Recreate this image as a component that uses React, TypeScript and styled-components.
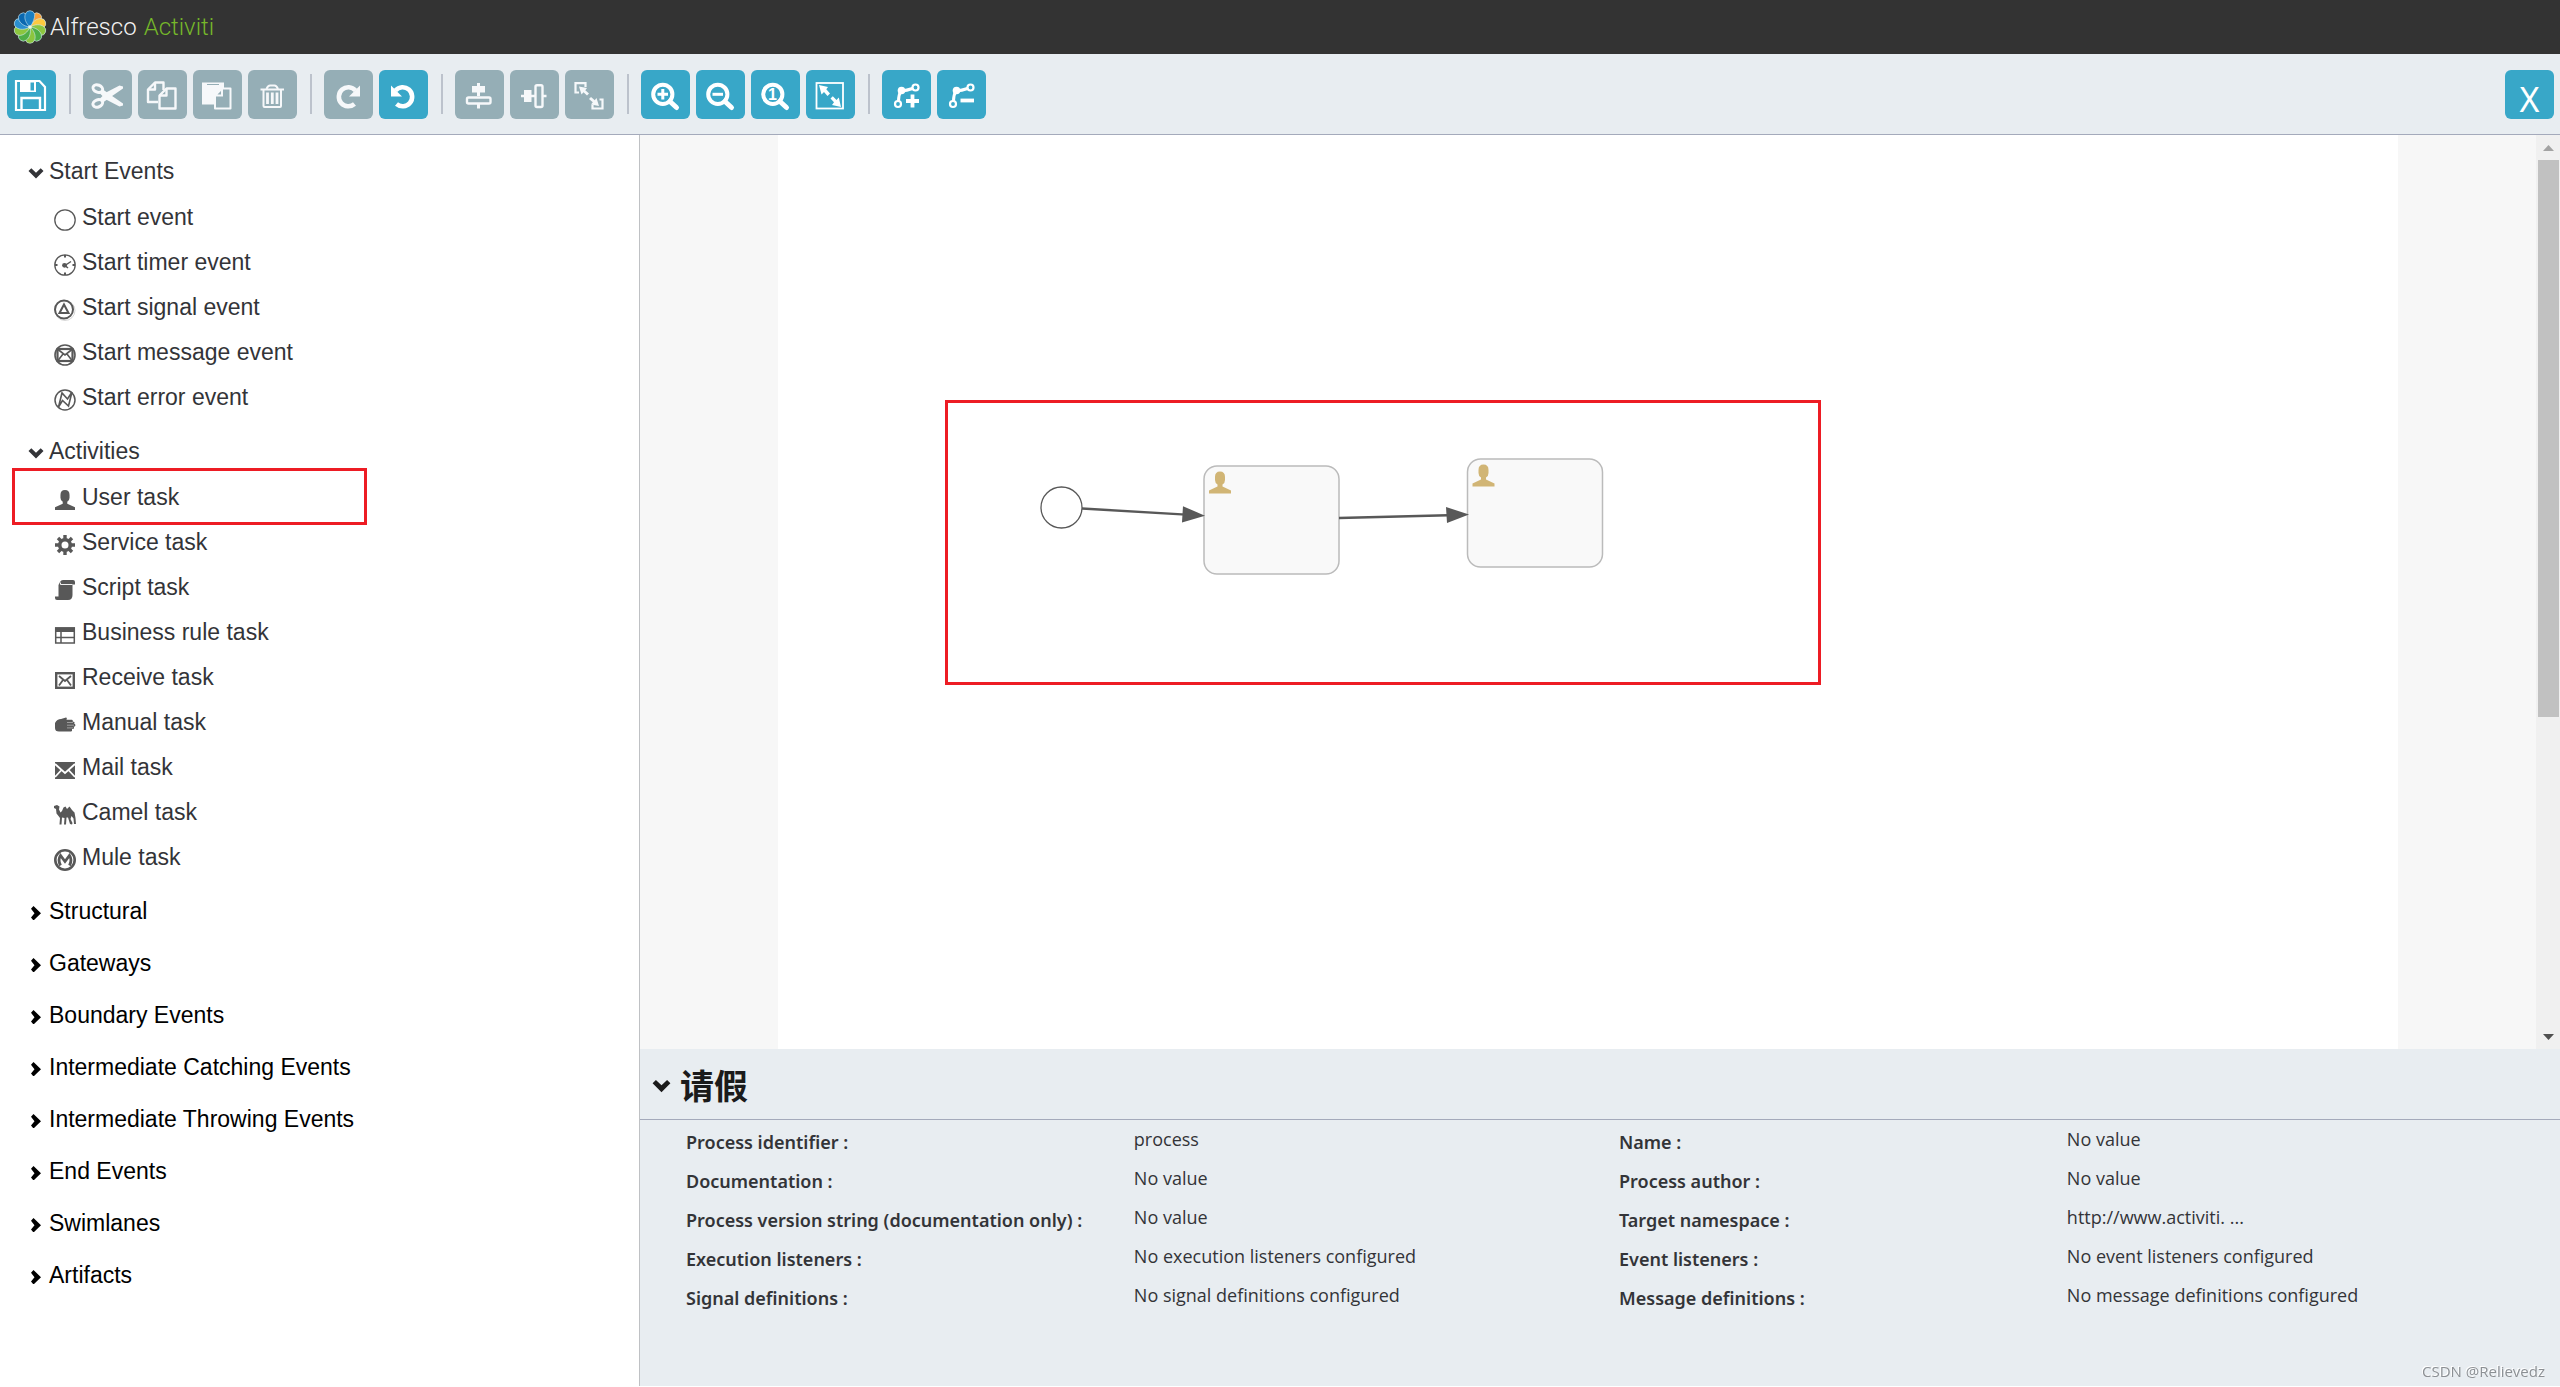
import React from "react";
import styled, { createGlobalStyle } from "styled-components";

const color = {
  bar: "#333333",
  panel: "#e8edf1",
  line: "#a4aabb",
  blue: "#38a7c8",
  muted: "#95aeb6",
  text: "#333438",
  icon: "#585858",
  mark: "#ed1c24",
};

const GlobalStyle = createGlobalStyle`
  * { box-sizing: border-box; }
  body { margin: 0; background: #ffffff; font-family: "Liberation Sans", Arial, sans-serif; color: ${color.text}; }
  h1, h2, ul, dl, dd, dt { margin: 0; padding: 0; font-weight: inherit; }
  button { font: inherit; color: inherit; border: 0; padding: 0; background: none; cursor: pointer; }
  svg { display: block; flex: none; }
`;

const Page = styled.div`
  display: flex;
  flex-direction: column;
  height: 100vh;
  padding-bottom: 1px;
`;

const Header = styled.header`
  display: flex;
  align-items: center;
  height: 54px;
  padding-left: 12px;
  background: ${color.bar};
`;

const Brand = styled.h1`
  display: flex;
  align-items: center;
  gap: 2px;
  font-family: Roboto, "Open Sans", sans-serif;
  font-size: 24px;
  font-weight: 300;
  line-height: 32px;
  color: #f2f2f2;
`;

const Product = styled.span`
  margin-left: 5px;
  color: #76b82a;
`;

const Toolbar = styled.div`
  display: flex;
  align-items: center;
  gap: 6px;
  height: 81px;
  padding: 0 6px 0 7px;
  background: ${color.panel};
  border-bottom: 1px solid ${color.line};
`;

const Divider = styled.span`
  width: 2px;
  height: 40px;
  margin: 0 6px 0 7px;
  background: #bcc2cc;
`;

const ToolButton = styled.button<{ $active?: boolean }>`
  width: 49px;
  height: 49px;
  border-radius: 6px;
  background: ${(p) => (p.$active ? color.blue : color.muted)};
  color: ${(p) => (p.$active ? "#ffffff" : "#f6f8fa")};
`;

const CloseButton = styled(ToolButton)`
  margin-left: auto;
  padding-top: 10px;
  font-family: "Noto Sans", sans-serif;
  font-size: 34px;
  line-height: 39px;
`;

const Workspace = styled.div`
  display: flex;
  flex: 1;
  min-height: 0;
`;

const Sidebar = styled.nav`
  width: 25%;
  padding: 14px 0 0 12px;
  border-right: 1px solid #bfc1c4;
  font-size: 23px;
  line-height: 45px;
`;

const Section = styled.section`
  margin-bottom: 7px;
`;

const SectionToggle = styled.button<{ $open?: boolean }>`
  display: flex;
  align-items: center;
  gap: 5px;
  height: 45px;
  padding-left: 16px;
  color: ${(p) => (p.$open ? color.text : "#000000")};
`;

const StencilList = styled.ul`
  padding: 1px 0 2px;
  list-style: none;
`;

const StencilItem = styled.li`
  position: relative;
  display: flex;
  align-items: center;
  gap: 6px;
  height: 45px;
  padding-left: 42px;

  svg { margin-top: 4px; color: ${color.icon}; }
`;

const ItemMark = styled.span`
  position: absolute;
  inset: -7px auto -5px 0;
  width: 355px;
  border: 3px solid ${color.mark};
`;

const Main = styled.main`
  display: flex;
  flex: 1;
  flex-direction: column;
  min-width: 0;
`;

const CanvasArea = styled.div`
  display: flex;
  flex: 1;
  min-height: 0;
  background: #f7f7f7;
`;

const CanvasScroll = styled.div`
  display: flex;
  flex: 1;
  justify-content: center;
  min-width: 0;
  overflow: hidden;
`;

const Canvas = styled.div`
  position: relative;
  width: 1620px;
  background: #ffffff;
`;

const Diagram = styled.svg`
  position: absolute;
  inset: 0;
`;

const ScrollTrack = styled.div`
  display: flex;
  flex-direction: column;
  align-items: center;
  justify-content: space-between;
  width: 24px;
  background: #f0f0f0;
`;

const ScrollStep = styled.button`
  display: flex;
  align-items: center;
  justify-content: center;
  width: 24px;
  height: 25px;
`;

const ScrollLane = styled.div`
  flex: 1;
  width: 21px;
`;

const ScrollThumb = styled.div`
  height: 64.5%;
  background: #c1c1c1;
`;

const Properties = styled.section`
  padding-bottom: 71px;
  background: ${color.panel};
`;

const PropertiesTitle = styled.button`
  display: flex;
  align-items: center;
  gap: 9px;
  width: 100%;
  height: 71px;
  padding-left: 12px;
  border-bottom: 1px solid ${color.line};
  font-family: "Noto Sans", "Noto Sans CJK SC", sans-serif;
  font-size: 34px;
  font-weight: 700;
  color: #1b1b1b;
`;

const PropertyGrid = styled.dl`
  display: grid;
  grid-template-columns: 1fr 1fr;
  padding: 0 27px;
  font-family: "Open Sans", "Noto Sans", sans-serif;
  font-size: 18px;
`;

const Property = styled.div`
  display: grid;
  grid-template-columns: 49fr 51fr;
  height: 39px;
  padding-left: 19px;
`;

const PropertyName = styled.dt`
  font-family: "Noto Sans", "Open Sans", sans-serif;
  font-weight: 600;
  line-height: 44px;
  white-space: nowrap;
`;

const PropertyValue = styled.dd`
  line-height: 38px;
  white-space: nowrap;
`;

const Watermark = styled.span`
  position: fixed;
  right: 15px;
  bottom: 6px;
  font-family: "Open Sans", "Noto Sans", sans-serif;
  font-size: 15px;
  line-height: 20px;
  color: #8c9094;
  text-shadow: -1px -1px 0 #ffffff;
`;

/* ---------- logo ---------- */

const petals = [
  { angle: 36, fill: "#f9a03c" },
  { angle: 72, fill: "#fdc93f" },
  { angle: 108, fill: "#8cc63f" },
  { angle: 144, fill: "#4fae47" },
  { angle: 180, fill: "#8cc63f" },
  { angle: 216, fill: "#4fae47" },
  { angle: 252, fill: "#8cc63f" },
  { angle: 288, fill: "#2a8fd0" },
  { angle: 324, fill: "#0a68b0" },
  { angle: 0, fill: "#1b7fc4" },
];

const Flower = () => (
  <svg width="36" height="36" viewBox="0 0 36 36" aria-hidden="true">
    {petals.map((p) => (
      <path
        key={p.angle}
        transform={`rotate(${p.angle} 18 18)`}
        d="M18 18C13.500 14 12 9 13.300 5.200A4.900 4.900 0 0 1 22.700 5.200C23 9 21 14 18 18Z"
        fill={p.fill}
        stroke="#cfe8ee"
        strokeWidth="0.600"
      />
    ))}
    <circle cx="18" cy="18" r="1.800" fill="#eef7e4" />
  </svg>
);

/* ---------- toolbar icons, drawn on the button's own 49px box ---------- */

const Lens = ({ children }: { children: React.ReactNode }) => (
  <>
    <circle cx="21.800" cy="24.300" r="9.600" fill="none" stroke="currentColor" strokeWidth="4" />
    <path d="M29 31.500L35.500 37.500" stroke="currentColor" strokeWidth="5" strokeLinecap="round" />
    {children}
  </>
);

const Bend = ({ children }: { children: React.ReactNode }) => (
  <>
    <g fill="none" stroke="currentColor" strokeWidth="2.200">
      <circle cx="16" cy="34" r="3" />
      <circle cx="33.500" cy="17.500" r="3" />
      <path d="M16.500 31Q16.500 25 19 21Q25 20.500 30.500 18.500" strokeWidth="3" />
    </g>
    <circle cx="19.500" cy="20.500" r="3.800" fill="currentColor" />
    {children}
  </>
);

const turn = (
  <>
    <path d="M31.500 20.500A9.500 9.500 0 1 0 30.500 34" fill="none" stroke="currentColor" strokeWidth="4.600" />
    <path d="M36 15.500V26.500H25L28.500 23L32.500 19Z" fill="currentColor" />
  </>
);

const glyphs: Record<string, React.ReactNode> = {
  save: (
    <>
      <path d="M9 11H32.500L38 17V40H9Z" fill="none" stroke="currentColor" strokeWidth="2.200" />
      <path fillRule="evenodd" d="M13 10H29V22H13ZM23.500 12.500V20.500H27V12.500Z" fill="currentColor" />
      <path d="M14.500 40V28H33V40" fill="none" stroke="currentColor" strokeWidth="2.400" />
    </>
  ),
  cut: (
    <>
      <g fill="none" stroke="currentColor" strokeWidth="3">
        <ellipse cx="14.800" cy="18.600" rx="5" ry="3.600" transform="rotate(22 14.800 18.600)" />
        <ellipse cx="14.800" cy="33.400" rx="5" ry="3.600" transform="rotate(-22 14.800 33.400)" />
      </g>
      <path d="M17 23.500L20 19.500L25.500 23.500L40 33.500V35.500L36.500 36.500L23 29.500Z" fill="currentColor" />
      <path d="M17 28.500L20 32.500L25.500 28.500L40 18.500V16.500L36.500 15.500L23 22.500Z" fill="currentColor" />
    </>
  ),
  copy: (
    <g fill="none" stroke="currentColor" strokeWidth="2.400" strokeLinejoin="round">
      <path d="M20 32H10V19.500L17 12.500H25.500V20" />
      <path d="M17 12.500V19.500H10" />
      <path d="M21.500 25.500L28.500 18.500H37.500V38.500H21.500Z" />
      <path d="M28.500 18.500V25.500H21.500" />
    </g>
  ),
  paste: (
    <>
      <path d="M9 12.500H31V34.500H9Z" fill="currentColor" />
      <path d="M14 14.500H26" stroke={color.muted} strokeWidth="1" />
      <path
        d="M22 25.500L29 18.500H37.500V38.500H22Z"
        fill={color.muted}
        stroke="currentColor"
        strokeWidth="2"
        strokeLinejoin="round"
      />
      <path d="M22 25.500L29 18.500V25.500Z" fill={color.muted} stroke="currentColor" strokeWidth="2" />
    </>
  ),
  remove: (
    <g fill="none" stroke="currentColor" strokeWidth="2">
      <path d="M12.500 19.500H36" />
      <path d="M18.500 19Q20 15.500 22 15.500H26.500Q28.500 15.500 30 19" />
      <path d="M15.500 20V36Q15.500 37 16.500 37H32Q33 37 33 36V20" />
      <path d="M19.500 22.500V34M24.300 22.500V34M29 22.500V34" strokeWidth="2.800" />
    </g>
  ),
  redo: turn,
  undo: <g transform="translate(48 0) scale(-1 1)">{turn}</g>,
  alignV: (
    <>
      <path d="M17 16H30V22.500H17Z" fill="currentColor" />
      <path d="M23.500 13V26M23.500 34V38.500" stroke="currentColor" strokeWidth="3" />
      <rect x="12" y="27.500" width="23.500" height="6" rx="1.500" fill="none" stroke="currentColor" strokeWidth="2.400" />
    </>
  ),
  alignH: (
    <>
      <path d="M14 20H21.500V32H14Z" fill="currentColor" />
      <path d="M11 26H25M33 26H36.500" stroke="currentColor" strokeWidth="2.600" />
      <rect x="25.500" y="15.200" width="7" height="21.800" rx="1.500" fill="none" stroke="currentColor" strokeWidth="2.400" />
    </>
  ),
  sameSize: (
    <>
      <g fill="none" stroke="currentColor" strokeWidth="2.200">
        <path d="M14 22.500H10.500V13.200H20.500V17" />
        <path d="M34.500 29.500H37.500V38.500H27.500V35" />
      </g>
      <path d="M14 16.500L22 18L20.300 20.200L24 23.500L22 25.500L18.500 22.300L16.500 24.500Z" fill="currentColor" />
      <path d="M34 36L26 34.500L27.800 32.300L24 29L26 27L29.800 30.300L31.500 28Z" fill="currentColor" />
    </>
  ),
  zoomIn: (
    <Lens>
      <path d="M16.500 24.300H27M21.800 19V29.500" stroke="currentColor" strokeWidth="3" />
    </Lens>
  ),
  zoomOut: (
    <Lens>
      <path d="M16.500 24.300H27" stroke="currentColor" strokeWidth="3" />
    </Lens>
  ),
  zoomActual: (
    <Lens>
      <text x="21.500" y="30" textAnchor="middle" fontFamily="Liberation Sans, sans-serif" fontSize="16" fontWeight="700" fill="currentColor">
        1
      </text>
    </Lens>
  ),
  zoomFit: (
    <>
      <rect x="10.500" y="13" width="26.500" height="25.500" fill="none" stroke="currentColor" strokeWidth="1.800" />
      <path d="M13 15L22 17L20.300 19.300L24 23.500L21.500 26L18 22L15.500 24.500Z" fill="currentColor" />
      <path d="M35 37L26 35L28 32.300L24.500 28.500L26.800 26.300L30.500 30L32.800 27.500Z" fill="currentColor" />
    </>
  ),
  bendAdd: (
    <Bend>
      <path d="M24 31H37M30.500 24.500V37.500" stroke="currentColor" strokeWidth="3.800" />
    </Bend>
  ),
  bendRemove: (
    <Bend>
      <path d="M23.500 30.500H37" stroke="currentColor" strokeWidth="3.800" />
    </Bend>
  ),
};

const ToolGlyph = ({ name }: { name: string }) => (
  <svg width="49" height="49" viewBox="0 0 49 49" aria-hidden="true">
    {glyphs[name]}
  </svg>
);

type Tool = { glyph: string; label: string; active?: boolean };

const toolGroups: Tool[][] = [
  [{ glyph: "save", label: "Save the model", active: true }],
  [
    { glyph: "cut", label: "Cut" },
    { glyph: "copy", label: "Copy" },
    { glyph: "paste", label: "Paste" },
    { glyph: "remove", label: "Delete" },
  ],
  [
    { glyph: "redo", label: "Redo" },
    { glyph: "undo", label: "Undo", active: true },
  ],
  [
    { glyph: "alignV", label: "Align vertical" },
    { glyph: "alignH", label: "Align horizontal" },
    { glyph: "sameSize", label: "Same size" },
  ],
  [
    { glyph: "zoomIn", label: "Zoom in", active: true },
    { glyph: "zoomOut", label: "Zoom out", active: true },
    { glyph: "zoomActual", label: "Zoom to actual size", active: true },
    { glyph: "zoomFit", label: "Zoom to fit", active: true },
  ],
  [
    { glyph: "bendAdd", label: "Add bend-point", active: true },
    { glyph: "bendRemove", label: "Remove bend-point", active: true },
  ],
];

/* ---------- stencil icons, 22px ---------- */

const ring = <circle cx="11" cy="11" r="10.200" fill="none" stroke="currentColor" strokeWidth="1.300" />;
const personPath =
  "M6 5.500Q6 0 11 0T16 5.500V8.500Q16 11.500 13.500 13V15L22 19V22H0V19L8.500 15V13Q6 11.500 6 8.500Z";

const stencilIcons: Record<string, React.ReactNode> = {
  start: ring,
  timer: (
    <>
      {ring}
      <path d="M11 1V3.500M11 18.500V21M1 11H3.500M18.500 11H21" stroke="currentColor" strokeWidth="2" />
      <path d="M17 7.500L11 11.500L14 14" fill="none" stroke="currentColor" strokeWidth="1.500" />
      <circle cx="10.500" cy="11.300" r="2.400" fill="currentColor" />
    </>
  ),
  signal: (
    <g fill="none" stroke="currentColor">
      <circle cx="10" cy="10.500" r="9" strokeWidth="2" />
      <path d="M10 5.500L14.500 14H5.500Z" strokeWidth="2" />
      <circle cx="11" cy="11.500" r="10" strokeWidth="0.800" opacity="0.300" />
    </g>
  ),
  message: (
    <g fill="none" stroke="currentColor">
      <circle cx="11" cy="11" r="10" strokeWidth="1.600" />
      <rect x="3.500" y="5" width="15" height="12" strokeWidth="2.200" />
      <path d="M4 5.500L11 11L18 5.500M4 16.500L9 10M18 16.500L13 10" strokeWidth="1.600" />
    </g>
  ),
  error: (
    <g fill="none" stroke="currentColor">
      <circle cx="11" cy="11" r="10" strokeWidth="1.500" />
      <path d="M4.500 18L8 4L13.500 10L18 3L14.500 17L8.500 11.500Z" strokeWidth="1.600" />
    </g>
  ),
  user: <path transform="translate(1 1) scale(0.909)" d={personPath} fill="currentColor" />,
  service: (
    <>
      <circle cx="11" cy="11" r="5.300" fill="none" stroke="currentColor" strokeWidth="3.600" />
      <path
        d="M11 1V5M11 17V21M1 11H5M17 11H21M4 4L6.800 6.800M15.200 15.200L18 18M18 4L15.200 6.800M6.800 15.200L4 18"
        stroke="currentColor"
        strokeWidth="3.400"
      />
    </>
  ),
  script: (
    <>
      <path d="M6 3Q7 1 9 1H19Q21 1 21 3V5.500H18.500V16Q18.500 21 14 21H3Q1 21 1 19V17.500H4.500V6Z" fill="currentColor" />
      <path d="M6.500 5.500H18.500M6.500 5.500V3.500" stroke="#ffffff" strokeWidth="0.900" fill="none" />
    </>
  ),
  rule: (
    <>
      <path d="M1.700 4H20.300V19H1.700ZM7 7V19M1.700 13.500H20.300" fill="none" stroke="currentColor" strokeWidth="1.500" />
      <path d="M1 3.300H21V8H1Z" fill="currentColor" />
    </>
  ),
  receive: (
    <g fill="none" stroke="currentColor">
      <rect x="2.200" y="4.200" width="17.600" height="14.600" strokeWidth="2.400" />
      <path d="M5 7L11 12L17 7M5 16.500L9 11M17 16.500L13 11" strokeWidth="1.800" />
    </g>
  ),
  manual: (
    <>
      <path
        d="M1 9Q3 5 7 5L12 3.500Q13.500 3.500 12.500 5.800H18Q19.200 6.500 18.800 7.800H20Q21.200 8.800 20.200 10H21Q22 11.300 20.800 12.500H19.800Q20.500 14 19.300 15H18Q18.500 17.500 17 17.500H5Q1 17.500 1 14Z"
        fill="currentColor"
      />
      <path d="M13 8.500H19M13 11.200H20M13 13.900H19" stroke="#ffffff" strokeWidth="0.700" opacity="0.600" />
    </>
  ),
  mail: (
    <>
      <path d="M1 3H21V20H1Z" fill="currentColor" />
      <path d="M1 5L11 14L21 5M1 18L7.500 11M21 18L14.500 11" fill="none" stroke="#ffffff" strokeWidth="1.800" />
    </>
  ),
  camel: (
    <path
      d="M0 2L3 1L5.500 2.500L5 5.500L6.500 8.500L8 7L9.500 3.500L11.500 2.500L13 5L15.500 2.500L18 6L20.500 8.500L21.500 14L22 20H20L19.500 14.500L17.500 12L16.500 15L18.500 19L18 20.500L16 20L14 13.500H12.500L12 20.500H10L10.500 14L8 13.500L7.500 20.500H5.500L6 14L4.500 12L2.500 9.500L2 5L0 4Z"
      fill="currentColor"
    />
  ),
  mule: (
    <>
      <circle cx="11" cy="11" r="9.700" fill="none" stroke="currentColor" strokeWidth="2.600" />
      <path d="M6.500 16.500Q3.500 11 6.500 6.500L11 12.500L15.500 6.500Q18.500 11 15.500 16.500" fill="none" stroke="currentColor" strokeWidth="2.800" />
    </>
  ),
};

const StencilIcon = ({ name }: { name: string }) => (
  <svg width="22" height="22" viewBox="0 0 22 22" aria-hidden="true">
    {stencilIcons[name]}
  </svg>
);

type Stencil = { icon: string; label: string; marked?: boolean };
type StencilGroup = { title: string; items?: Stencil[] };

const stencilGroups: StencilGroup[] = [
  {
    title: "Start Events",
    items: [
      { icon: "start", label: "Start event" },
      { icon: "timer", label: "Start timer event" },
      { icon: "signal", label: "Start signal event" },
      { icon: "message", label: "Start message event" },
      { icon: "error", label: "Start error event" },
    ],
  },
  {
    title: "Activities",
    items: [
      { icon: "user", label: "User task", marked: true },
      { icon: "service", label: "Service task" },
      { icon: "script", label: "Script task" },
      { icon: "rule", label: "Business rule task" },
      { icon: "receive", label: "Receive task" },
      { icon: "manual", label: "Manual task" },
      { icon: "mail", label: "Mail task" },
      { icon: "camel", label: "Camel task" },
      { icon: "mule", label: "Mule task" },
    ],
  },
  { title: "Structural" },
  { title: "Gateways" },
  { title: "Boundary Events" },
  { title: "Intermediate Catching Events" },
  { title: "Intermediate Throwing Events" },
  { title: "End Events" },
  { title: "Swimlanes" },
  { title: "Artifacts" },
];

const Chevron = ({ open, size = 16 }: { open?: boolean; size?: number }) => (
  <svg width={size} height={size} viewBox="0 0 16 16" aria-hidden="true">
    {open ? (
      <path d="M0.500 7L3.300 4.200L8 8.700L12.700 4.200L15.500 7L8 14.500Z" fill="currentColor" />
    ) : (
      <path d="M5.500 2L3 4.700L6.500 9.300L3 13.500L5.500 16.500L13 9.300Z" fill="currentColor" />
    )}
  </svg>
);

/* ---------- diagram ---------- */

const UserTask = ({ x, y }: { x: number; y: number }) => (
  <g transform={`translate(${x} ${y})`}>
    <rect width="135" height="108" rx="13" fill="#f9f9f9" stroke="#bbbbbb" strokeWidth="1.500" />
    <path transform="translate(5 5.500)" d={personPath} fill="#d1b575" />
  </g>
);

const properties: [string, string][] = [
  ["Process identifier", "process"],
  ["Name", "No value"],
  ["Documentation", "No value"],
  ["Process author", "No value"],
  ["Process version string (documentation only)", "No value"],
  ["Target namespace", "http://www.activiti. ..."],
  ["Execution listeners", "No execution listeners configured"],
  ["Event listeners", "No event listeners configured"],
  ["Signal definitions", "No signal definitions configured"],
  ["Message definitions", "No message definitions configured"],
];

export default function App() {
  return (
    <Page>
      <GlobalStyle />
      <Header>
        <Brand>
          <Flower />
          <span>Alfresco</span>
          <Product>Activiti</Product>
        </Brand>
      </Header>

      <Toolbar role="toolbar" aria-label="Editor tools">
        {toolGroups.map((group, i) => (
          <React.Fragment key={group[0].glyph}>
            {i > 0 && <Divider />}
            {group.map((tool) => (
              <ToolButton key={tool.glyph} type="button" aria-label={tool.label} $active={tool.active}>
                <ToolGlyph name={tool.glyph} />
              </ToolButton>
            ))}
          </React.Fragment>
        ))}
        <CloseButton type="button" aria-label="Close" $active>
          X
        </CloseButton>
      </Toolbar>

      <Workspace>
        <Sidebar aria-label="Stencils">
          {stencilGroups.map((group) => (
            <Section key={group.title}>
              <SectionToggle type="button" aria-expanded={!!group.items} $open={!!group.items}>
                <Chevron open={!!group.items} />
                {group.title}
              </SectionToggle>
              {group.items && (
                <StencilList>
                  {group.items.map((item) => (
                    <StencilItem key={item.label}>
                      <StencilIcon name={item.icon} />
                      {item.label}
                      {item.marked && <ItemMark />}
                    </StencilItem>
                  ))}
                </StencilList>
              )}
            </Section>
          ))}
        </Sidebar>

        <Main>
          <CanvasArea>
            <CanvasScroll>
              <Canvas>
                <Diagram width="1620" height="914" viewBox="0 0 1620 914" role="img" aria-label="Process diagram">
                  <circle cx="283.500" cy="372.500" r="20.500" fill="#ffffff" stroke="#585858" strokeWidth="1.300" />
                  <UserTask x={426} y={331} />
                  <UserTask x={689.5} y={324} />
                  <g stroke="#585858" strokeWidth="2.400">
                    <path d="M304 373.500L408 379.600" />
                    <path d="M561 383L670 380.200" />
                  </g>
                  <g fill="#585858">
                    <path d="M405 371.200L427 380.800L404 387.600Z" />
                    <path d="M668 372L691 379.500L669 388Z" />
                  </g>
                  <rect x="168.500" y="266.500" width="873" height="282" fill="none" stroke={color.mark} strokeWidth="3" />
                </Diagram>
              </Canvas>
            </CanvasScroll>
            <ScrollTrack>
              <ScrollStep type="button" aria-label="Scroll up">
                <svg width="11" height="6" viewBox="0 0 11 6">
                  <path d="M0 6L5.500 0L11 6Z" fill="#a3a3a3" />
                </svg>
              </ScrollStep>
              <ScrollLane>
                <ScrollThumb />
              </ScrollLane>
              <ScrollStep type="button" aria-label="Scroll down">
                <svg width="11" height="6" viewBox="0 0 11 6">
                  <path d="M0 0L5.500 6L11 0Z" fill="#505050" />
                </svg>
              </ScrollStep>
            </ScrollTrack>
          </CanvasArea>

          <Properties>
            <h2>
              <PropertiesTitle type="button" aria-expanded="true">
                <Chevron open size={19} />
                请假
              </PropertiesTitle>
            </h2>
            <PropertyGrid>
              {properties.map(([name, value]) => (
                <Property key={name}>
                  <PropertyName>{name} :</PropertyName>
                  <PropertyValue>{value}</PropertyValue>
                </Property>
              ))}
            </PropertyGrid>
          </Properties>
        </Main>
      </Workspace>
      <Watermark>CSDN @Relievedz</Watermark>
    </Page>
  );
}
